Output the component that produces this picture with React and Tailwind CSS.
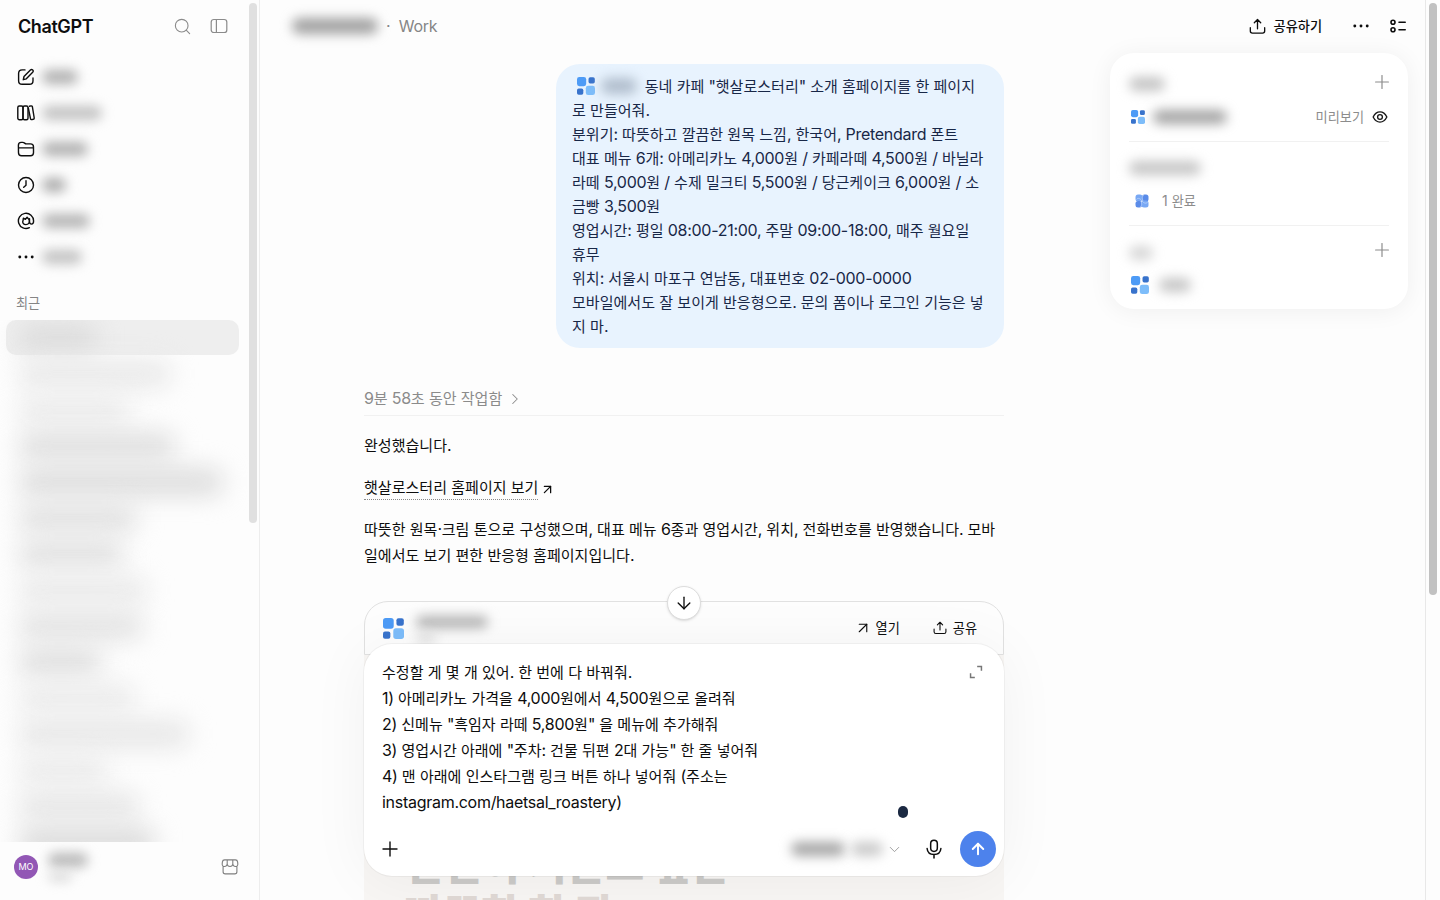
import { ArrowDown, ArrowUp, ArrowUpRight, ChevronDown, ChevronRight, Plus, Search } from "lucide-react";

const recents = [
  { width: "w-[80px]", tone: "bg-[#dcdcdc]" },
  { width: "w-[154px]", tone: "bg-[#e9e9e9]" },
  { width: "w-[112px]", tone: "bg-[#ebebeb]" },
  { width: "w-[158px]", tone: "bg-[#dfdfdf]" },
  { width: "w-[206px]", tone: "bg-[#dddddd]" },
  { width: "w-[120px]", tone: "bg-[#e1e1e1]" },
  { width: "w-[106px]", tone: "bg-[#e1e1e1]" },
  { width: "w-[130px]", tone: "bg-[#eaeaea]" },
  { width: "w-[126px]", tone: "bg-[#e3e3e3]" },
  { width: "w-[84px]", tone: "bg-[#dfdfdf]" },
  { width: "w-[118px]", tone: "bg-[#ebebeb]" },
  { width: "w-[172px]", tone: "bg-[#e7e7e7]" },
  { width: "w-[90px]", tone: "bg-[#ebebeb]" },
  { width: "w-[122px]", tone: "bg-[#e6e6e6]" },
  { width: "w-[138px]", tone: "bg-[#dadada]" },
];

const requestLines = [
  "로 만들어줘.",
  "분위기: 따뜻하고 깔끔한 원목 느낌, 한국어, Pretendard 폰트",
  "대표 메뉴 6개: 아메리카노 4,000원 / 카페라떼 4,500원 / 바닐라",
  "라떼 5,000원 / 수제 밀크티 5,500원 / 당근케이크 6,000원 / 소",
  "금빵 3,500원",
  "영업시간: 평일 08:00-21:00, 주말 09:00-18:00, 매주 월요일",
  "휴무",
  "위치: 서울시 마포구 연남동, 대표번호 02-000-0000",
  "모바일에서도 잘 보이게 반응형으로. 문의 폼이나 로그인 기능은 넣",
  "지 마.",
];

const draftLines = [
  "수정할 게 몇 개 있어. 한 번에 다 바꿔줘.",
  "1) 아메리카노 가격을 4,000원에서 4,500원으로 올려줘",
  '2) 신메뉴 "흑임자 라떼 5,800원" 을 메뉴에 추가해줘',
  '3) 영업시간 아래에 "주차: 건물 뒤편 2대 가능" 한 줄 넣어줘',
  "4) 맨 아래에 인스타그램 링크 버튼 하나 넣어줘 (주소는",
  "instagram.com/haetsal_roastery)",
];

// Hangul runs are set slightly smaller than the Latin around them
function Mixed({ children }) {
  return children.split(/([가-힣]+)/).map((part, i) =>
    i % 2 ? <span key={i} className="text-[0.94em] tracking-normal">{part}</span> : part
  );
}

function Svg({ size = 18, width = 1.4, className = "", children }) {
  return (
    <svg width={size} height={size} viewBox="0 0 18 18" fill="none" stroke="currentColor" strokeWidth={width} strokeLinecap="round" strokeLinejoin="round" className={`shrink-0 ${className}`}>
      {children}
    </svg>
  );
}

function Blur({ className }) {
  return <span className={`block shrink-0 rounded-full blur-[6px] ${className}`} />;
}

function AppMark({ size = 18 }) {
  return (
    <svg width={size} height={size} viewBox="0 0 20 20" className="shrink-0">
      <rect x="0" y="0" width="10.2" height="10.2" rx="2.6" fill="#4d9bf6" />
      <rect x="12.8" y="0.3" width="7" height="7" rx="1.9" fill="#3873cc" />
      <rect x="0" y="12.8" width="7" height="7" rx="1.9" fill="#3873cc" />
      <rect x="9.8" y="9.8" width="10.2" height="10.2" rx="2.6" fill="#7dbdfa" />
    </svg>
  );
}

function ShareIcon({ size }) {
  return (
    <Svg size={size} width={1.4}>
      <path d="M9 11.5V1.6M5.6 5 9 1.6 12.4 5M1.4 10.2v3.6c0 1.4.8 2.2 2.2 2.2h10.8c1.4 0 2.2-.8 2.2-2.2v-3.6" />
    </Svg>
  );
}

function Dots() {
  return (
    <Svg>
      <g fill="currentColor" stroke="none">
        <circle cx="2.8" cy="9" r="1.45" />
        <circle cx="9" cy="9" r="1.45" />
        <circle cx="15.2" cy="9" r="1.45" />
      </g>
    </Svg>
  );
}

const navItems = [
  {
    blur: "w-9 bg-[#b0b0b0]",
    icon: <Svg><path d="M8 1.9H5.2C2.8 1.9 1.6 3.1 1.6 5.5v7.2c0 2.4 1.2 3.6 3.6 3.6h7.2c2.4 0 3.6-1.2 3.6-3.6V10M6.3 11.7l.7-3.2 6.4-6.4c.7-.7 1.7-.7 2.3-.1.7.7.6 1.6 0 2.3L9.3 10.8z" /></Svg>,
  },
  {
    blur: "w-[60px] bg-[#c2c2c2]",
    icon: <Svg><rect x=".8" y="2" width="5.2" height="13.8" rx="1.5" /><rect x="6" y="2" width="5" height="13.8" rx="1.5" /><path d="m12.4 2.2 1.6-.3c.8-.1 1.2.2 1.4.9l1.8 11.1c.1.8-.2 1.3-.9 1.4l-1.4.3c-.8.1-1.3-.2-1.4-1L11.3 4" /></Svg>,
  },
  {
    blur: "w-[46px] bg-[#b0b0b0]",
    icon: <Svg><path d="M1.4 5.2c0-1.9.9-2.8 2.7-2.8h1.7c1.7 0 1.9 1.5 3.5 1.5h4.2c2 0 3 1 3 3v5.8c0 2-1 3-3 3h-9c-2 0-3-1-3-3zM1.4 7.9h15.1" /></Svg>,
  },
  {
    blur: "w-6 bg-[#ababab]",
    icon: <Svg><circle cx="9" cy="9" r="7.5" /><path d="M9 4.8v4.4l-2.3 2.1" /></Svg>,
  },
  {
    blur: "w-[48px] bg-[#b4b4b4]",
    icon: <Svg><path d="M12.4 15.7A7.6 7.6 0 1 1 16.6 9c0 2-.8 3.1-2.1 3.1-1.2 0-1.9-.8-2-2.1V6.8" /><path d="M6 8.6c-.9 1.8.4 4 2.9 4s4-1.9 3.4-4.2M6 8.8l.4-2.7 2 1.2 1.7-2.1 1.5 2" /></Svg>,
  },
  { blur: "w-10 bg-[#c2c2c2]", icon: <Dots /> },
];

function Sidebar() {
  return (
    <aside className="flex h-full w-[260px] shrink-0 border-r border-[#ededed]">
      <div className="flex w-[249px] flex-col">
        <div className="flex h-[52px] items-center pl-[18px] pr-[21px]">
          <span className="flex-1 text-[18px] font-semibold tracking-[-0.4px]">ChatGPT</span>
          <Search size={19} strokeWidth={1.4} className="text-[#8b8b8b]" />
          <Svg className="ml-[18px] text-[#8b8b8b]" width={1.2}><rect x="1.2" y="2.5" width="15.6" height="13" rx="2.6" /><path d="M6.4 2.5v13" /></Svg>
        </div>
        <nav className="mt-[7px]">
          {navItems.map((item, i) => (
            <div key={i} className="flex h-9 items-center gap-[7px] pl-[17px]">
              {item.icon}
              <Blur className={`h-3.5 ${item.blur}`} />
            </div>
          ))}
        </nav>
        <div className="flex h-[45px] items-center pl-4 pt-3 text-[14px] text-[#858585]"><Mixed>최근</Mixed></div>
        <div className="min-h-0 flex-1 overflow-hidden">
          {recents.map((item, i) => (
            <div key={i} className={`ml-1.5 flex h-[35px] w-[233px] items-center rounded-[10px] pl-3 ${i === 0 ? "bg-[#eeeeee]" : "mt-px"}`}>
              <span className={`block h-7 rounded-full blur-[12px] ${item.width} ${item.tone}`} />
            </div>
          ))}
        </div>
        <div className="flex h-[58px] items-center pb-2 pl-3.5 pr-2.5">
          <span className="flex size-6 items-center justify-center rounded-full bg-[#9257b5] text-[9px] tracking-normal text-white">MO</span>
          <div className="flex-1 space-y-1.5 pl-2.5">
            <Blur className="h-3.5 w-10 bg-[#b8b8b8]" />
            <Blur className="h-2 w-6 bg-[#d6d6d6]" />
          </div>
          <Svg className="text-[#7e7e7e]" width={1.1}><path d="M2.1 8v5.8c0 1.4.7 2.1 2.1 2.1h9.6c1.4 0 2.1-.7 2.1-2.1V8M3.5 1.9h11c1.2 0 1.9.7 2.1 2l.2 2c.2 1.5-.8 2.6-2.2 2.6-1.5 0-2.6-1-2.8-2.5C11.6 7.5 10.5 8.500 9 8.500S6.400 7.500 6.200 6C6 7.500 4.900 8.500 3.400 8.500 2 8.500 1 7.400 1.200 5.900l.2-2c.2-1.300.9-2 2.100-2zM6.200 6V2M11.800 6V2" /></Svg>
        </div>
      </div>
      <div className="mt-[3px] h-[520px] w-2 rounded-full bg-[#e0e0e0]" />
    </aside>
  );
}

function SummaryPanel() {
  return (
    <div className="absolute left-[850px] top-[53px] h-[256px] w-[298px] rounded-[24px] bg-white px-[19px] text-[14px] text-[#8c8c8c] shadow-[0_2px_24px_rgba(0,0,0,0.06)]">
      <div className="flex h-[89px] flex-col border-b border-[#f1f1f1] pt-4">
        <div className="flex h-[26px] items-center justify-between">
          <Blur className="mt-1 h-3.5 w-9 bg-[#c4c4c4]" />
          <Plus size={22} strokeWidth={1.3} className="-mr-1" />
        </div>
        <div className="mt-2 flex h-[27px] items-center">
          <span className="pl-0.5"><AppMark size={14} /></span>
          <Blur className="ml-2 h-3.5 w-[74px] bg-[#a4a4a4]" />
          <span className="ml-auto mr-2 whitespace-nowrap"><Mixed>미리보기</Mixed></span>
          <Svg size={16} className="mr-px text-[#161616]" width={1.5}><path d="M1.3 9C3 5.5 5.7 3.3 9 3.3S15 5.5 16.7 9C15 12.5 12.3 14.7 9 14.7S3 12.5 1.3 9Z" /><circle cx="9" cy="9" r="2.7" /></Svg>
        </div>
      </div>
      <div className="h-[84px] border-b border-[#f1f1f1] pt-[19px]">
        <Blur className="h-3.5 w-[72px] bg-[#c6c6c6]" />
        <div className="mt-[15px] flex h-[22px] items-center gap-[13px] pl-1.5">
          <svg width="14" height="14" viewBox="0 0 14 14">
            <rect x=".5" y=".5" width="7" height="7" rx="2.5" fill="#78a8f4" />
            <rect x="7" y=".5" width="6.5" height="7" rx="2.5" fill="#598be9" />
            <rect x=".5" y="7" width="6.5" height="6.5" rx="2.5" fill="#5b8ce9" />
            <rect x="6.5" y="6.5" width="7" height="7" rx="2.5" fill="#78a8f4" />
            <path d="M1.5 5.5c1-1.8 3.500-1.500 5.500 1.500 2 2.500 4.500 2.800 5.700 1M8.700 1.300C6.800 2.500 7 5 8 6.500M5.300 12.700C7.200 11.500 7 9 6 7.500" stroke="#c3d9fb" strokeWidth=".7" fill="none" />
          </svg>
          <span className="tracking-normal"><Mixed>1 완료</Mixed></span>
        </div>
      </div>
      <div className="flex items-center justify-between pt-[13px]">
        <Blur className="mt-1.5 h-3.5 w-6 bg-[#d6d6d6]" />
        <Plus size={22} strokeWidth={1.3} className="-mr-1" />
      </div>
      <div className="mt-[15px] flex items-center gap-2.5 pl-0.5">
        <AppMark size={18} />
        <Blur className="h-3.5 w-8 bg-[#c6c6c6]" />
      </div>
    </div>
  );
}

function Composer() {
  return (
    <div className="absolute left-[104px] top-[644px] flex h-[232px] w-[640px] flex-col rounded-[28px] bg-white shadow-[0_0_0_1px_rgba(0,0,0,0.04),0_4px_60px_rgba(0,0,0,0.05)]">
      <div className="flex flex-1 justify-between pl-[18px] pr-[21px] pt-[15px] text-[16px]">
        <div>
          {draftLines.map((line) => (
            <p key={line} className="h-[26px] whitespace-nowrap leading-[26px]"><Mixed>{line}</Mixed></p>
          ))}
        </div>
        <Svg size={14} className="mt-1.5 text-[#777777]" width={1.9}><path strokeLinecap="butt" strokeLinejoin="miter" d="M10.5 2H16v5.5M2 10.5V16h5.5" /></Svg>
      </div>
      <span className="absolute left-[534px] top-[162px] h-3 w-[10px] rounded-full bg-[#1b2942]" />
      <div className="flex h-[54px] items-center pl-[14px] pr-2">
        <Plus size={24} strokeWidth={1.4} />
        <Blur className="ml-auto h-3.5 w-[54px] bg-[#a6a6a6]" />
        <Blur className="ml-1.5 h-3.5 w-8 bg-[#cacaca]" />
        <ChevronDown size={17} strokeWidth={1.3} className="ml-[3px] text-[#999999]" />
        <Svg size={20} width={1.35} className="ml-[21px]"><rect x="6" y="1.2" width="6" height="10" rx="3" /><path d="M2.8 8.5c.3 3.5 2.8 5.4 6.2 5.4s5.9-1.9 6.2-5.4M9 14v3" /></Svg>
        <span className="ml-4 flex size-9 items-center justify-center rounded-full bg-[#4d82ec] text-white">
          <ArrowUp size={18} strokeWidth={2.6} />
        </span>
      </div>
    </div>
  );
}

export default function App() {
  return (
    <div className="flex h-[900px] w-[1440px] overflow-hidden bg-[#fdfdfd] font-['Inter','Noto_Sans_CJK_KR',sans-serif] tracking-[-0.28px] text-[#0d0d0d]">
      <Sidebar />
      <main className="relative h-full w-[1165px] shrink-0 overflow-hidden">
        <header className="flex h-[52px] items-center pl-8 pr-[18px]">
          <Blur className="h-4 w-[86px] bg-[#a2a2a2]" />
          <span className="ml-2 text-[16px] text-[#868686]">·&nbsp; Work</span>
          <span className="ml-auto mr-2"><ShareIcon size={17} /></span>
          <span className="mr-[30px] text-[14px] font-medium"><Mixed>공유하기</Mixed></span>
          <Dots />
          <Svg className="ml-[19px]" width={1.6}><circle cx="4" cy="5.3" r="2" /><circle cx="4" cy="12.7" r="2" /><path d="M10 5.3h6.2M10 12.7h6.2" /></Svg>
        </header>

        <div className="ml-[104px] w-[640px]">
          <div className="ml-auto mt-3 h-[284px] w-[448px] rounded-[24px] bg-[#e8f3fe] px-4 pt-[10px] text-[16px] leading-6 text-[#182747]">
            <div className="flex h-6 items-center whitespace-nowrap pl-[5px]">
              <AppMark size={18} />
              <Blur className="ml-1.5 h-4 w-9 bg-[#b0bdcc]" />
              <span className="ml-auto mr-[13px]"><Mixed>동네 카페 "햇살로스터리" 소개 홈페이지를 한 페이지</Mixed></span>
            </div>
            {requestLines.map((line) => (
              <p key={line} className="h-6 whitespace-nowrap"><Mixed>{line}</Mixed></p>
            ))}
          </div>

          <div className="mt-9 flex h-8 items-center gap-1 border-b border-[#f1f1f1] pb-0.5 text-[16px] text-[#8b8b8b]">
            <span><Mixed>9분 58초 동안 작업함</Mixed></span>
            <ChevronRight size={18} strokeWidth={1.4} />
          </div>

          <div className="mt-4 text-[16px]">
            <p className="h-[26px] leading-[26px]"><Mixed>완성했습니다.</Mixed></p>
            <p className="mt-[17px] flex h-[26px] items-center">
              <span className="border-b border-dotted border-[#888888] leading-[22px]"><Mixed>햇살로스터리 홈페이지 보기</Mixed></span>
              <ArrowUpRight size={15} strokeWidth={2} className="ml-0.5 mt-0.5" />
            </p>
            <p className="mt-[15px] h-[26px] whitespace-nowrap leading-[26px]"><Mixed>따뜻한 원목·크림 톤으로 구성했으며, 대표 메뉴 6종과 영업시간, 위치, 전화번호를 반영했습니다. 모바</Mixed></p>
            <p className="h-[26px] whitespace-nowrap leading-[26px]"><Mixed>일에서도 보기 편한 반응형 홈페이지입니다.</Mixed></p>
          </div>

          <div className="mt-[33px]">
            <div className="flex h-[54px] items-center rounded-t-[24px] border border-[#e1e1e1] pl-[18px] pr-[26px] text-[14px]">
              <AppMark size={21} />
              <div className="ml-3 space-y-1.5 pt-0.5">
                <Blur className="h-3 w-[72px] bg-[#b2b2b2]" />
                <Blur className="h-2 w-5 bg-[#d9d9d9]" />
              </div>
              <ArrowUpRight size={18} strokeWidth={1.5} className="ml-auto mr-1" />
              <span><Mixed>열기</Mixed></span>
              <span className="ml-[33px] mr-1.5"><ShareIcon size={14} /></span>
              <span><Mixed>공유</Mixed></span>
            </div>
            <div className="h-[300px] overflow-hidden bg-[#f8f6f4] pl-10 pt-[185px] text-[42px] font-black leading-[50px] tracking-normal">
              <p className="whitespace-nowrap text-[#cbcac8]">천천히 지은그 깊은</p>
              <p className="whitespace-nowrap text-[#e0d9d5]">따뜻한 한 잔</p>
            </div>
          </div>
        </div>

        <Composer />
        <span className="absolute left-[407px] top-[586px] flex size-[34px] items-center justify-center rounded-full border border-[#dddddd] bg-white shadow-sm">
          <ArrowDown size={20} strokeWidth={1.6} />
        </span>
        <SummaryPanel />
      </main>
      <div className="flex w-[15px] justify-center border-l border-[#e8e8e8]">
        <div className="mt-[3px] h-[592px] w-2 rounded-full bg-[#c1c1c1]" />
      </div>
    </div>
  );
}
